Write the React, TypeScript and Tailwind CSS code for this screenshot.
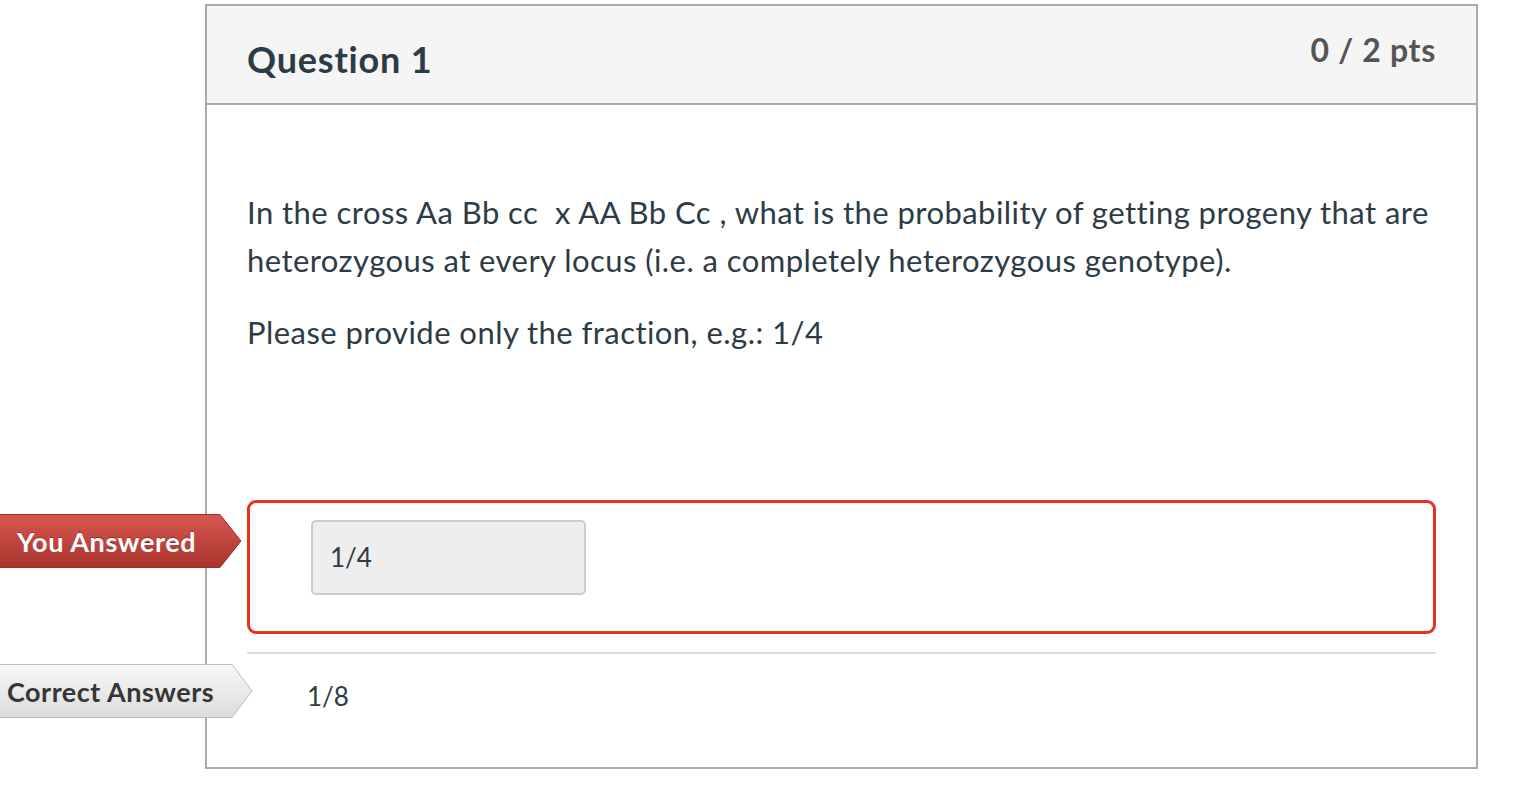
import React from "react";

const font = { fontFamily: "Lato, 'Open Sans', sans-serif" };

function Badge({ label, tone }: { label: string; tone: "red" | "gray" }) {
  const red = tone === "red";
  const w = red ? 242 : 253;
  const body = red ? 220 : 232;
  return (
    <div
      className={`absolute top-0 -left-[247px] h-[54px] flex items-center ${red ? "w-[242px]" : "w-[253px]"}`}
    >
      <svg className="absolute inset-0" width={w} height={54} viewBox={`0 0 ${w} 54`}>
        <defs>
          <linearGradient id={`g-${tone}`} x1="0" y1="0" x2="0" y2="1">
            {red ? (
              <>
                <stop offset="0" stopColor="#d85650" />
                <stop offset="1" stopColor="#a9342c" />
              </>
            ) : (
              <>
                <stop offset="0" stopColor="#f8f8f8" />
                <stop offset="1" stopColor="#dcdcdc" />
              </>
            )}
          </linearGradient>
        </defs>
        <path
          d={`M-2 0.5 H${body} L${w - 1} 27 L${body} 53.5 H-2 Z`}
          fill={`url(#g-${tone})`}
          stroke={red ? "#9c2f28" : "#bdbdbd"}
          strokeWidth="1"
        />
      </svg>
      <span
        className={`relative font-bold text-[27px] leading-none ${
          red
            ? "pl-[17px] tracking-[0.6px] text-white [text-shadow:0_-1px_0_rgba(0,0,0,0.3)]"
            : "pl-[7px] tracking-[0.5px] text-[#363636]"
        }`}
      >
        {label}
      </span>
    </div>
  );
}

export default function App() {
  return (
    <div className="min-h-[800px] bg-white pt-[4px] pl-[205px]" style={font}>
      <div className="w-[1273px] border-2 border-[#aaaaaa] bg-white">
        {/* header */}
        <div className="h-[99px] bg-[#f5f5f5] border-b-2 border-[#aaaaaa] px-[40px] flex justify-between items-start">
          <h3 className="mt-[35px] text-[36px] leading-none tracking-[0.8px] font-bold text-[#2d3b45]">Question 1</h3>
          <div className="mt-[28px] text-[32px] leading-none tracking-[0.7px] font-bold text-[#555555]">0 / 2 pts</div>
        </div>

        {/* body */}
        <div className="px-[40px] pt-[83px] pb-[49px] text-[#2d3b45]">
          <p className="text-[31px] leading-[48px] tracking-[0.45px]">
            In the cross Aa Bb cc&nbsp; x AA Bb Cc , what is the probability of getting progeny that are
            heterozygous at every locus (i.e. a completely heterozygous genotype).
          </p>
          <p className="mt-[24px] text-[31px] leading-[48px] tracking-[0.45px]">
            Please provide only the fraction, e.g.: 1/4
          </p>

          <div className="relative mt-[144px]">
            <div className="relative top-[14px]">
              <Badge label="You Answered" tone="red" />
            </div>
            <div className="border-[3px] border-[#e9311f] rounded-[9px] pl-[61px] pt-[17px] pb-[36px]">
              <div className="w-[275px] h-[75px] bg-[#eeeeee] border-2 border-[#cccccc] rounded-[5px] pl-[17px] flex items-center text-[26px]">
                1/4
              </div>
            </div>
          </div>

          <div className="mt-[18px] h-[2px] bg-[#dddddd]" />

          <div className="relative mt-[10px] h-[54px] flex items-center">
            <Badge label="Correct Answers" tone="gray" />
            <span className="pl-[60px] mt-[10px] text-[26px]">1/8</span>
          </div>
        </div>
      </div>
    </div>
  );
}
